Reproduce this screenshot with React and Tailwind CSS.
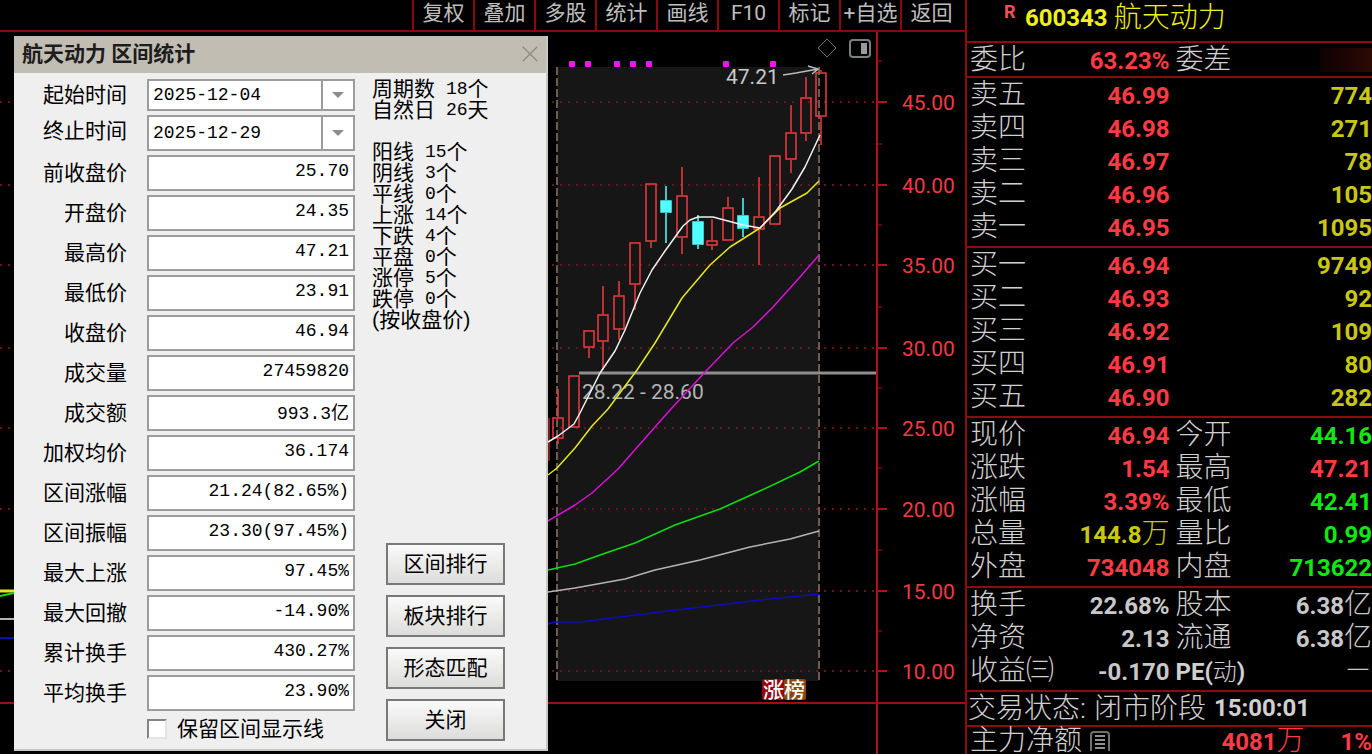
import { X } from 'lucide-react';

const TOOLBAR = ['复权', '叠加', '多股', '统计', '画线', 'F10', '标记', '+自选', '返回'];

const RANGE_FIELDS = [
  ['前收盘价', '25.70'],
  ['开盘价', '24.35'],
  ['最高价', '47.21'],
  ['最低价', '23.91'],
  ['收盘价', '46.94'],
  ['成交量', '27459820'],
  ['成交额', '993.3亿'],
  ['加权均价', '36.174'],
  ['区间涨幅', '21.24(82.65%)'],
  ['区间振幅', '23.30(97.45%)'],
  ['最大上涨', '97.45%'],
  ['最大回撤', '-14.90%'],
  ['累计换手', '430.27%'],
  ['平均换手', '23.90%'],
];

const PERIOD_COUNTS = [
  ['周期数', '18', '个'],
  ['自然日', '26', '天'],
];

const LINE_COUNTS = [
  ['阳线', '15'],
  ['阴线', '3'],
  ['平线', '0'],
  ['上涨', '14'],
  ['下跌', '4'],
  ['平盘', '0'],
  ['涨停', '5'],
  ['跌停', '0'],
];

const ACTIONS = ['区间排行', '板块排行', '形态匹配', '关闭'];

const ASKS = [
  ['卖五', '46.99', '774'],
  ['卖四', '46.98', '271'],
  ['卖三', '46.97', '78'],
  ['卖二', '46.96', '105'],
  ['卖一', '46.95', '1095'],
];

const BIDS = [
  ['买一', '46.94', '9749'],
  ['买二', '46.93', '92'],
  ['买三', '46.92', '109'],
  ['买四', '46.91', '80'],
  ['买五', '46.90', '282'],
];

const RED = 'text-[#ff3a44]';
const GREEN = 'text-[#10e810]';
const YELLOW = 'text-[#c8c814]';
const GRAY = 'text-[#c8c8c8]';

const QUOTES = [
  ['现价', '46.94', RED, '今开', '44.16', GREEN],
  ['涨跌', '1.54', RED, '最高', '47.21', RED],
  ['涨幅', '3.39%', RED, '最低', '42.41', GREEN],
  ['总量', '144.8万', YELLOW, '量比', '0.99', GREEN],
  ['外盘', '734048', RED, '内盘', '713622', GREEN],
];

const FUNDAMENTALS = [
  ['换手', '22.68%', GRAY, '股本', '6.38亿', GRAY],
  ['净资', '2.13', GRAY, '流通', '6.38亿', GRAY],
  ['收益㈢', '-0.170', GRAY, 'PE(动)', '－', GRAY],
];

// x, high, body top, body bottom, low, falling
const CANDLES = [
  [558, 389, 417, 439, 444],
  [574, 375, 375, 428, 428],
  [589, 330, 330, 348, 358],
  [603, 286, 314, 342, 370],
  [619, 281, 295, 330, 340],
  [635, 242, 242, 285, 310],
  [651, 183, 183, 242, 248],
  [666, 186, 200, 213, 243, true],
  [682, 167, 195, 238, 254],
  [698, 215, 221, 245, 249, true],
  [712, 219, 240, 246, 250],
  [728, 197, 207, 241, 241],
  [743, 198, 215, 229, 237, true],
  [759, 177, 216, 230, 265],
  [775, 155, 155, 225, 225],
  [791, 105, 132, 160, 173],
  [806, 77, 97, 134, 141],
  [821, 70, 72, 117, 145],
];

const AVERAGES = [
  ['#0c0cc8', '548,624 555,622 580,622 620,617 660,612 710,606 760,600 819,594'],
  ['#b4b4b4', '548,592 575,588 625,579 655,570 700,560 750,547 790,539 819,531'],
  ['#10dc10', '548,570 575,564 600,555 635,543 675,525 720,509 762,490 800,472 819,461'],
  [
    '#dc10dc',
    '548,521 575,505 592,493 618,469 640,444 655,427 670,410 707,370 733,343 753,327 773,307 800,277 819,255',
  ],
  [
    '#e6e620',
    '548,475 557,468 575,448 592,426 608,409 637,370 655,343 682,298 710,265 730,247 760,228 780,208 807,193 819,181',
  ],
  [
    '#f0f0f0',
    '548,442 558,436 574,424 580,413 600,373 615,351 625,330 640,293 652,270 665,251 683,226 690,220 698,217 713,217 743,225 760,228 776,211 792,189 805,167 820,135',
  ],
];

const PRICE_LEVELS = [
  ['45.00', 102],
  ['40.00', 185],
  ['35.00', 265],
  ['30.00', 348],
  ['25.00', 428],
  ['20.00', 509],
  ['15.00', 591],
  ['10.00', 671],
];

const MINOR_TICKS = [61, 144, 225, 307, 388, 468, 550, 631];

const SIGNAL_DOTS = [572, 588, 617, 633, 649, 726, 773];

function Toolbar() {
  return (
    <nav className="flex h-8 justify-end border-b-2 border-[#8c0810] pr-1">
      {TOOLBAR.map((name) => (
        <button
          key={name}
          type="button"
          className="w-[61px] border-l-2 border-[#8c0810] pb-1 text-center text-[21px] leading-6 whitespace-nowrap text-[#bebebe]"
        >
          {name}
        </button>
      ))}
    </nav>
  );
}

function Candle({ x, high, top, bottom, low, falling }) {
  const color = falling ? '#50ffff' : '#f03a40';
  return (
    <g stroke={color} strokeWidth="1.5">
      <path d={`M${x} ${high}V${top}M${x} ${bottom}V${low}`} />
      <rect
        x={x - 5}
        y={top + 1}
        width="10"
        height={bottom - top - 2}
        fill={falling ? color : 'none'}
      />
    </g>
  );
}

function KLineChart() {
  return (
    <svg
      className="block w-full font-['Roboto','Noto_Sans_CJK_SC',sans-serif] text-[21px]"
      viewBox="0 32 965 722"
      fill="none"
      role="img"
      aria-label="K线图"
    >
      <rect x="557" y="67" width="262" height="614" fill="#161616" />

      {PRICE_LEVELS.map(([price, y]) => (
        <g key={price}>
          <path d={`M0 ${y}H876`} stroke="#6c1418" strokeWidth="2" strokeDasharray="2 6" />
          <path d={`M877 ${y}H887`} stroke="#b41018" strokeWidth="2" />
          <text x="902" y={y + 8} fill="#f03a40">
            {price}
          </text>
        </g>
      ))}
      {MINOR_TICKS.map((y) => (
        <path key={y} d={`M877 ${y}H882`} stroke="#b41018" strokeWidth="1" />
      ))}

      <path d="M557 67V681M819 67V681" stroke="#6e5a50" strokeWidth="2" strokeDasharray="8 3" />
      <path d="M877 32V754" stroke="#b01018" strokeWidth="2" />
      <path d="M0 703H965" stroke="#a00c14" strokeWidth="2" />

      <path d="M0 591H14" stroke="#e6e620" strokeWidth="3" />
      <path d="M0 596L14 593" stroke="#10dc10" strokeWidth="2" />
      <path d="M0 619H14" stroke="#b4b4b4" strokeWidth="2" />
      <path d="M0 638H14" stroke="#0c0cb8" strokeWidth="2" />

      <path d="M579 373H876" stroke="#8e8e8e" strokeWidth="3" />
      <text x="582" y="399" fill="#b4b4b4">
        28.22 - 28.60
      </text>

      <path d="M549 418V461" stroke="#f03a40" strokeWidth="1" />
      {CANDLES.map(([x, high, top, bottom, low, falling]) => (
        <Candle key={x} x={x} high={high} top={top} bottom={bottom} low={low} falling={falling} />
      ))}
      {AVERAGES.map(([color, points]) => (
        <polyline key={color} points={points} stroke={color} strokeWidth="1.5" strokeLinejoin="round" />
      ))}

      {SIGNAL_DOTS.map((x) => (
        <rect key={x} x={x - 3} y="61" width="6" height="6" rx="1" fill="#f014f0" />
      ))}
      <text x="726" y="84" fill="#c8c8c8">
        47.21
      </text>
      <path d="M783 75L796 73L818 69M808 66L818 69L812 74" stroke="#b4bcbc" strokeWidth="1.5" />

      <path d="M827 39L836 48L827 57L818 48Z" stroke="#6e6e6e" strokeWidth="1" />
      <rect x="850" y="40" width="20" height="17" rx="3" stroke="#7c8080" strokeWidth="2" />
      <rect x="861" y="43" width="6" height="11" fill="#9a9c9c" />

      <rect x="762" y="679" width="22" height="21" rx="2" fill="#96060e" />
      <rect x="784" y="679" width="22" height="21" rx="2" fill="#8c480c" />
      <text x="763" y="697" fill="#fff" fontWeight="500">
        涨榜
      </text>
    </svg>
  );
}

function DateField({ id, label, value, size }) {
  return (
    <div className="flex gap-5">
      <label htmlFor={id} className="w-[113px] text-right text-[21px] leading-8">
        {label}
      </label>
      <div className={`relative flex w-[208px] border-2 border-[#9c9c9c] bg-white ${size}`}>
        <select
          id={id}
          defaultValue={value}
          className="w-full appearance-none pl-1 font-['Liberation_Mono','Noto_Sans_CJK_SC',monospace] text-lg leading-6"
        >
          <option>{value}</option>
        </select>
        <span className="pointer-events-none absolute inset-y-0 right-0 flex w-8 items-center justify-center border-l-2 border-[#9c9c9c]">
          <svg className="h-2 w-3" viewBox="0 0 12 8">
            <path d="M0 1H12L6 7Z" fill="#8c8c8c" />
          </svg>
        </span>
      </div>
    </div>
  );
}

function CountRow({ name, value, unit }) {
  return (
    <div className="flex h-[21px] items-center whitespace-pre">
      <dt className="text-[21px] leading-[21px]">{name}</dt>
      <dd className="flex items-center pl-[11px] text-[21px] leading-[21px]">
        <span className="font-['Liberation_Mono',monospace] text-lg leading-[21px]">{value}</span>
        {unit}
      </dd>
    </div>
  );
}

function RangeDialog() {
  return (
    <section
      role="dialog"
      aria-labelledby="range-title"
      className="absolute top-9 left-3.5 w-[534px] border-r-2 border-b-2 border-[#c8c8c4] bg-[#efefef] text-black"
    >
      <header className="flex h-[37px] items-center justify-between bg-[#c1bdb3] pr-0.5 pb-0.5 pl-2">
        <h2 id="range-title" className="text-[21px] leading-7 font-bold text-[#1c1c1c]">
          航天动力 区间统计
        </h2>
        <button type="button" aria-label="关闭窗口" className="text-[#8c8880]">
          <X className="size-7" strokeWidth={1} />
        </button>
      </header>

      <div className="flex pt-1.5 pb-1.5">
        <form className="flex flex-col gap-1">
          <DateField id="start" label="起始时间" value="2025-12-04" size="h-8" />
          <DateField id="end" label="终止时间" value="2025-12-29" size="h-9" />
          {RANGE_FIELDS.map(([name, value]) => (
            <div key={name} className="flex gap-5">
              <label htmlFor={name} className="w-[113px] text-right text-[21px] leading-9">
                {name}
              </label>
              <input
                id={name}
                readOnly
                value={value}
                className="h-9 w-[208px] border-2 border-[#9c9c9c] bg-white pr-1 pb-1 text-right font-['Liberation_Mono','Noto_Sans_CJK_SC',monospace] text-lg"
              />
            </div>
          ))}
          <label className="ml-[133px] flex h-7 items-center gap-2.5 text-[21px] leading-7">
            <input
              type="checkbox"
              className="size-5 appearance-none border-2 border-t-[#848484] border-r-[#e4e4e4] border-b-[#e4e4e4] border-l-[#848484] bg-white"
            />
            保留区间显示线
          </label>
        </form>

        <div className="flex flex-1 flex-col justify-between pl-[17px]">
          <dl>
            {PERIOD_COUNTS.map(([name, value, unit]) => (
              <CountRow key={name} name={name} value={value} unit={unit} />
            ))}
            <div className="h-[21px]" />
            {LINE_COUNTS.map(([name, value]) => (
              <CountRow key={name} name={name} value={value} unit="个" />
            ))}
            <div className="text-[21px] leading-[21px]">(按收盘价)</div>
          </dl>
          <div className="mb-0.5 ml-3.5 flex w-[119px] flex-col gap-2.5">
            {ACTIONS.map((name) => (
              <button
                key={name}
                type="button"
                className="h-[42px] border-2 border-[#787878] bg-linear-to-b from-[#fafafa] to-[#dcdcda] text-[21px] leading-7"
              >
                {name}
              </button>
            ))}
          </div>
        </div>
      </div>
    </section>
  );
}

// Figures are bold, Chinese units next to them stay thin.
function Figure({ text }) {
  const [, digits, unit] = text.match(/^([-\d.%]*)(.*)$/);
  return (
    <>
      <span className="text-2xl leading-none font-bold">{digits}</span>
      {unit}
    </>
  );
}

function QuoteTable({ children }) {
  return (
    <table className="w-full table-fixed border-t-2 border-[#8c0c10]">
      <colgroup>
        <col className="w-[90px]" />
        <col />
        <col className="w-[90px]" />
        <col />
      </colgroup>
      <tbody className="text-[28px] leading-[33px] font-light">{children}</tbody>
    </table>
  );
}

function RowLabel({ children, className = 'pl-[3px]' }) {
  return (
    <th scope="row" className={`p-0 text-left font-light whitespace-nowrap text-[#d0d0d0] ${className}`}>
      {children}
    </th>
  );
}

function DepthTable({ rows }) {
  return (
    <div className="pb-[3px]">
      <QuoteTable>
        {rows.map(([name, price, volume]) => (
          <tr key={name} className="h-[33px]">
            <RowLabel>{name}</RowLabel>
            <td className={`p-0 text-right ${RED}`}>
              <Figure text={price} />
            </td>
            <td colSpan={2} className={`p-0 text-right ${YELLOW}`}>
              <Figure text={volume} />
            </td>
          </tr>
        ))}
      </QuoteTable>
    </div>
  );
}

function PairTable({ rows }) {
  return (
    <div className="pb-[3px]">
      <QuoteTable>
        {rows.map(([name, value, color, name2, value2, color2]) => (
          <tr key={name} className="h-[33px]">
            <RowLabel>{name}</RowLabel>
            <td className={`p-0 text-right ${color}`}>
              <Figure text={value} />
            </td>
            <RowLabel className="pl-1.5">
              {name2 === 'PE(动)' ? (
                <span className="text-2xl leading-none">
                  <b className="font-bold">PE(</b>动<b className="font-bold">)</b>
                </span>
              ) : (
                name2
              )}
            </RowLabel>
            <td className={`p-0 text-right whitespace-nowrap ${color2}`}>
              <Figure text={value2} />
            </td>
          </tr>
        ))}
      </QuoteTable>
    </div>
  );
}

function QuotePanel() {
  return (
    <aside className="w-[407px] shrink-0 border-l-2 border-[#8c0c10]">
      <h1 className="flex h-[41px] gap-1.5 pl-[37px] text-[28px] leading-9 font-light text-[#f0f014]">
        <sup className="top-0 w-[15px] text-lg leading-6 font-bold text-[#f05058]">R</sup>
        <span className="text-2xl leading-9 font-bold">600343</span>
        航天动力
      </h1>

      <QuoteTable>
        <tr className="h-[33px]">
          <RowLabel>委比</RowLabel>
          <td className={`p-0 text-right ${RED}`}>
            <Figure text="63.23%" />
          </td>
          <RowLabel className="pl-1.5">委差</RowLabel>
          <td className="p-0">
            <div className="ml-auto h-6 w-13 bg-linear-to-r from-[#100202] to-[#2c0a04]" />
          </td>
        </tr>
      </QuoteTable>

      <DepthTable rows={ASKS} />
      <DepthTable rows={BIDS} />
      <PairTable rows={QUOTES} />
      <PairTable rows={FUNDAMENTALS} />

      <p className="flex h-[35px] gap-2 border-t-2 border-[#8c0c10] pl-px text-[28px] leading-[33px] font-light whitespace-nowrap text-[#d0d0d0]">
        <span>交易状态:</span>
        <span>闭市阶段</span>
        <time className="text-2xl leading-[33px] font-bold">15:00:01</time>
      </p>

      <div className="flex items-center border-t-2 border-[#8c0c10] pl-[3px] text-[28px] leading-7 font-light whitespace-nowrap">
        <span className="text-[#d0d0d0]">主力净额</span>
        <svg className="ml-2 h-5 w-5" viewBox="0 0 20 20" fill="none" aria-hidden="true">
          <rect x="1" y="1" width="18" height="22" rx="3" stroke="#707070" strokeWidth="2" />
          <path d="M5 5H15M5 9H15M5 13H15M5 17H15" stroke="#909090" strokeWidth="2" />
        </svg>
        <span className={`ml-auto ${RED}`}>
          <Figure text="4081万" />
        </span>
        <span className={`ml-9 ${RED}`}>
          <Figure text="1%" />
        </span>
      </div>
    </aside>
  );
}

export default function App() {
  return (
    <div className="flex h-screen overflow-hidden bg-black font-['Roboto','Noto_Sans_CJK_SC',sans-serif]">
      <main className="relative min-w-0 flex-1">
        <Toolbar />
        <KLineChart />
        <RangeDialog />
      </main>
      <QuotePanel />
    </div>
  );
}
